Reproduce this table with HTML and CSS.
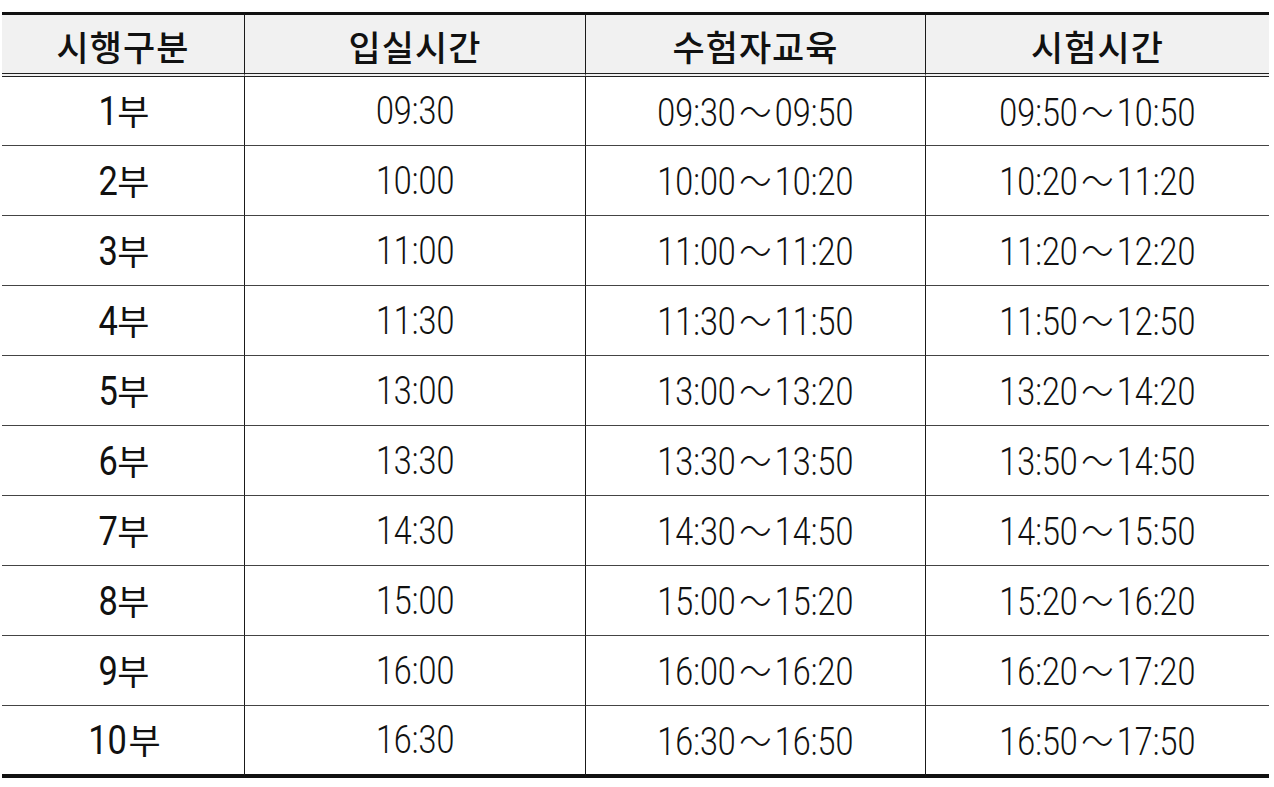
FILE: index.html
```html
<!DOCTYPE html>
<html lang="ko">
<head>
<meta charset="utf-8">
<title>시행구분</title>
<link rel="stylesheet" href="styles.css">
</head>
<body>
<table class="schedule">
  <colgroup>
    <col class="c1"><col class="c2"><col class="c3"><col class="c4">
  </colgroup>
  <thead>
    <tr><th>시행구분</th><th>입실시간</th><th>수험자교육</th><th>시험시간</th></tr>
  </thead>
  <tbody>
    <tr><td><span class="ld">1</span><span class="lk">부</span></td><td><span class="n">09:30</span></td><td><span class="n">09:30<span class="t">～</span>09:50</span></td><td><span class="n">09:50<span class="t">～</span>10:50</span></td></tr>
    <tr><td><span class="ld">2</span><span class="lk">부</span></td><td><span class="n">10:00</span></td><td><span class="n">10:00<span class="t">～</span>10:20</span></td><td><span class="n">10:20<span class="t">～</span>11:20</span></td></tr>
    <tr><td><span class="ld">3</span><span class="lk">부</span></td><td><span class="n">11:00</span></td><td><span class="n">11:00<span class="t">～</span>11:20</span></td><td><span class="n">11:20<span class="t">～</span>12:20</span></td></tr>
    <tr><td><span class="ld">4</span><span class="lk">부</span></td><td><span class="n">11:30</span></td><td><span class="n">11:30<span class="t">～</span>11:50</span></td><td><span class="n">11:50<span class="t">～</span>12:50</span></td></tr>
    <tr><td><span class="ld">5</span><span class="lk">부</span></td><td><span class="n">13:00</span></td><td><span class="n">13:00<span class="t">～</span>13:20</span></td><td><span class="n">13:20<span class="t">～</span>14:20</span></td></tr>
    <tr><td><span class="ld">6</span><span class="lk">부</span></td><td><span class="n">13:30</span></td><td><span class="n">13:30<span class="t">～</span>13:50</span></td><td><span class="n">13:50<span class="t">～</span>14:50</span></td></tr>
    <tr><td><span class="ld">7</span><span class="lk">부</span></td><td><span class="n">14:30</span></td><td><span class="n">14:30<span class="t">～</span>14:50</span></td><td><span class="n">14:50<span class="t">～</span>15:50</span></td></tr>
    <tr><td><span class="ld">8</span><span class="lk">부</span></td><td><span class="n">15:00</span></td><td><span class="n">15:00<span class="t">～</span>15:20</span></td><td><span class="n">15:20<span class="t">～</span>16:20</span></td></tr>
    <tr><td><span class="ld">9</span><span class="lk">부</span></td><td><span class="n">16:00</span></td><td><span class="n">16:00<span class="t">～</span>16:20</span></td><td><span class="n">16:20<span class="t">～</span>17:20</span></td></tr>
    <tr class="last"><td><span class="ld">10</span><span class="lk">부</span></td><td><span class="n">16:30</span></td><td><span class="n">16:30<span class="t">～</span>16:50</span></td><td><span class="n">16:50<span class="t">～</span>17:50</span></td></tr>
  </tbody>
</table>
</body>
</html>
```
FILE: styles.css
```css
html, body {
  margin: 0;
  padding: 0;
  background: #ffffff;
}

.schedule {
  margin: 12px 0 0 2px;
  width: 1267px;
  border-collapse: separate;
  border-spacing: 0;
  table-layout: fixed;
  color: #111111;
}

.c1 { width: 243px; }
.c2 { width: 341px; }
.c3 { width: 340px; }
.c4 { width: 343px; }

.schedule th,
.schedule td {
  padding: 0;
  text-align: center;
  vertical-align: middle;
  border-right: 1px solid #1a1a1a;
  box-sizing: border-box;
  white-space: nowrap;
}

.schedule th:last-child,
.schedule td:last-child {
  border-right: none;
}

.schedule th {
  height: 65px;
  background: #f1f1f1;
  border-top: 3px solid #111111;
  border-bottom: 4px double #222222;
  font-family: "Noto Sans CJK KR", sans-serif;
  font-weight: 500;
  font-size: 35px;
  letter-spacing: 1px;
  line-height: 40px;
  padding-top: 3px;
}

.schedule td {
  height: 70px;
  padding-top: 8px;
  border-bottom: 1px solid #444444;
  line-height: 44px;
}

.schedule tbody tr:first-child td {
  height: 69px;
}

.schedule .last td {
  height: 72px;
  border-bottom: 4px solid #111111;
}

.n {
  display: inline-block;
  font-family: "Roboto", "Liberation Sans", sans-serif;
  font-weight: 300;
  font-size: 38px;
  color: #111111;
  transform: scaleX(0.85);
}

.t {
  font-family: "Noto Sans CJK KR", sans-serif;
  font-weight: 300;
  margin: 0 4px;
}

.ld {
  display: inline-block;
  font-family: "Roboto", "Liberation Sans", sans-serif;
  font-weight: 400;
  font-size: 40px;
  transform: scaleX(0.86);
  margin-right: -2px;
}

.lk {
  font-family: "Noto Sans CJK KR", sans-serif;
  font-weight: 400;
  font-size: 35px;
}
```
